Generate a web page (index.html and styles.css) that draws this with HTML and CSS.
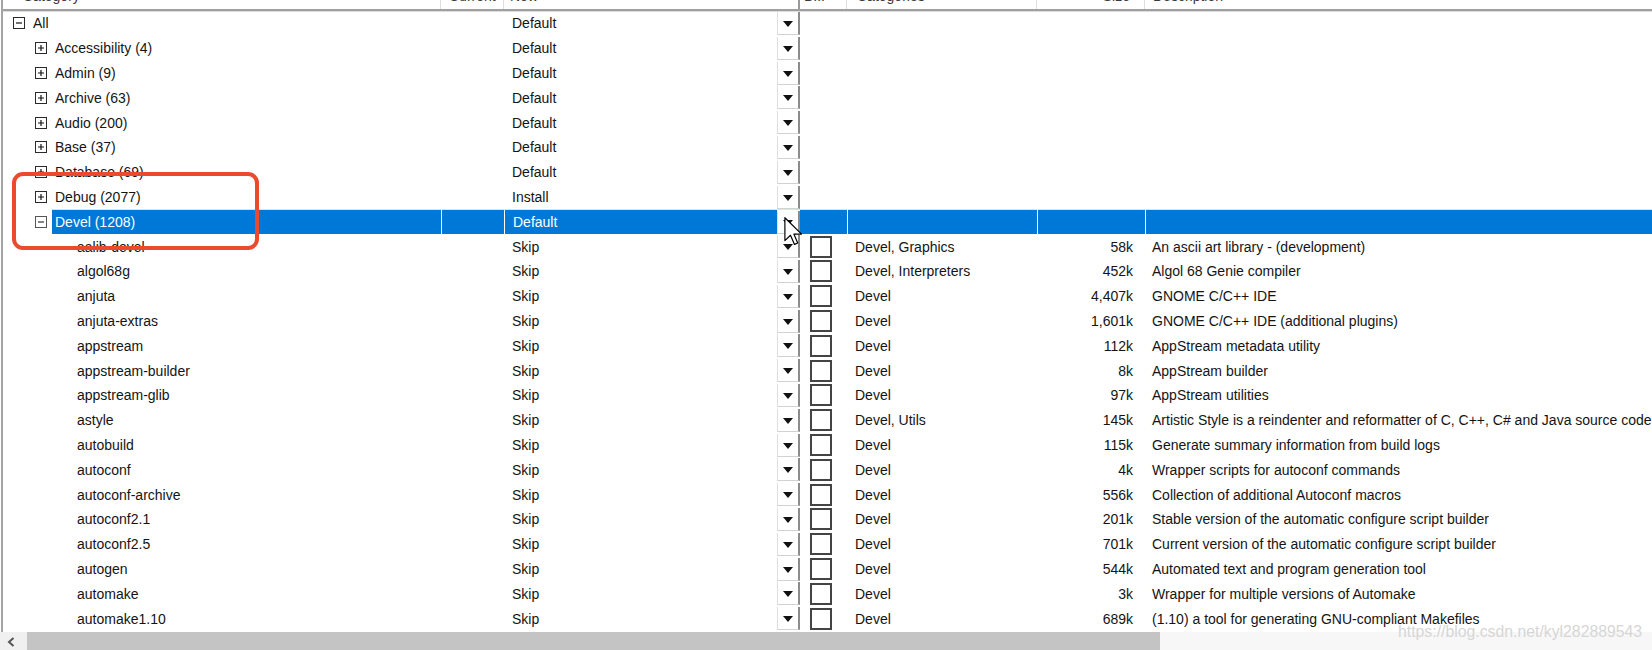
FILE: index.html
```html
<!DOCTYPE html>
<html>
<head>
<meta charset="utf-8">
<link rel="stylesheet" href="styles.css">
</head>
<body>
<div class="grid">
  <div class="row head">
    <div class="cell c0"><span class="htxt">Category</span></div>
    <div class="cell c1"><span class="htxt">Current</span></div>
    <div class="cell c2"><span class="htxt">New</span></div>
    <div class="cell c3"><span class="htxt">B...</span></div>
    <div class="cell c4"><span class="htxt">Categories</span></div>
    <div class="cell c5"><span class="htxt">Size</span></div>
    <div class="cell c6"><span class="htxt">Description</span></div>
  </div>

  <div class="row">
    <div class="cell c0 l0"><svg class="exp" viewBox="0 0 12 12"><rect x=".5" y=".5" width="11" height="11" fill="#fff" stroke="#2a2a2a"/><path d="M3 6h6" stroke="#111" stroke-width="1.2"/></svg><span class="lbl">All</span></div>
    <div class="cell c1"></div>
    <div class="cell c2"><span class="val">Default</span><span class="dd"><i></i></span></div>
    <div class="cell c3"></div><div class="cell c4"></div><div class="cell c5"></div><div class="cell c6"></div>
  </div>
  <div class="row">
    <div class="cell c0 l1"><svg class="exp" viewBox="0 0 12 12"><rect x=".5" y=".5" width="11" height="11" fill="#fff" stroke="#2a2a2a"/><path d="M3 6h6M6 3v6" stroke="#111" stroke-width="1.2"/></svg><span class="lbl">Accessibility (4)</span></div>
    <div class="cell c1"></div>
    <div class="cell c2"><span class="val">Default</span><span class="dd"><i></i></span></div>
    <div class="cell c3"></div><div class="cell c4"></div><div class="cell c5"></div><div class="cell c6"></div>
  </div>
  <div class="row">
    <div class="cell c0 l1"><svg class="exp" viewBox="0 0 12 12"><rect x=".5" y=".5" width="11" height="11" fill="#fff" stroke="#2a2a2a"/><path d="M3 6h6M6 3v6" stroke="#111" stroke-width="1.2"/></svg><span class="lbl">Admin (9)</span></div>
    <div class="cell c1"></div>
    <div class="cell c2"><span class="val">Default</span><span class="dd"><i></i></span></div>
    <div class="cell c3"></div><div class="cell c4"></div><div class="cell c5"></div><div class="cell c6"></div>
  </div>
  <div class="row">
    <div class="cell c0 l1"><svg class="exp" viewBox="0 0 12 12"><rect x=".5" y=".5" width="11" height="11" fill="#fff" stroke="#2a2a2a"/><path d="M3 6h6M6 3v6" stroke="#111" stroke-width="1.2"/></svg><span class="lbl">Archive (63)</span></div>
    <div class="cell c1"></div>
    <div class="cell c2"><span class="val">Default</span><span class="dd"><i></i></span></div>
    <div class="cell c3"></div><div class="cell c4"></div><div class="cell c5"></div><div class="cell c6"></div>
  </div>
  <div class="row">
    <div class="cell c0 l1"><svg class="exp" viewBox="0 0 12 12"><rect x=".5" y=".5" width="11" height="11" fill="#fff" stroke="#2a2a2a"/><path d="M3 6h6M6 3v6" stroke="#111" stroke-width="1.2"/></svg><span class="lbl">Audio (200)</span></div>
    <div class="cell c1"></div>
    <div class="cell c2"><span class="val">Default</span><span class="dd"><i></i></span></div>
    <div class="cell c3"></div><div class="cell c4"></div><div class="cell c5"></div><div class="cell c6"></div>
  </div>
  <div class="row">
    <div class="cell c0 l1"><svg class="exp" viewBox="0 0 12 12"><rect x=".5" y=".5" width="11" height="11" fill="#fff" stroke="#2a2a2a"/><path d="M3 6h6M6 3v6" stroke="#111" stroke-width="1.2"/></svg><span class="lbl">Base (37)</span></div>
    <div class="cell c1"></div>
    <div class="cell c2"><span class="val">Default</span><span class="dd"><i></i></span></div>
    <div class="cell c3"></div><div class="cell c4"></div><div class="cell c5"></div><div class="cell c6"></div>
  </div>
  <div class="row">
    <div class="cell c0 l1"><svg class="exp" viewBox="0 0 12 12"><rect x=".5" y=".5" width="11" height="11" fill="#fff" stroke="#2a2a2a"/><path d="M3 6h6M6 3v6" stroke="#111" stroke-width="1.2"/></svg><span class="lbl">Database (69)</span></div>
    <div class="cell c1"></div>
    <div class="cell c2"><span class="val">Default</span><span class="dd"><i></i></span></div>
    <div class="cell c3"></div><div class="cell c4"></div><div class="cell c5"></div><div class="cell c6"></div>
  </div>
  <div class="row">
    <div class="cell c0 l1"><svg class="exp" viewBox="0 0 12 12"><rect x=".5" y=".5" width="11" height="11" fill="#fff" stroke="#2a2a2a"/><path d="M3 6h6M6 3v6" stroke="#111" stroke-width="1.2"/></svg><span class="lbl">Debug (2077)</span></div>
    <div class="cell c1"></div>
    <div class="cell c2"><span class="val">Install</span><span class="dd"><i></i></span></div>
    <div class="cell c3"></div><div class="cell c4"></div><div class="cell c5"></div><div class="cell c6"></div>
  </div>
  <div class="row sel">
    <div class="cell c0 l1"><svg class="exp" viewBox="0 0 12 12"><rect x=".5" y=".5" width="11" height="11" fill="#fff" stroke="#555"/><path d="M3 6h6" stroke="#333" stroke-width="1.2"/></svg><span class="lbl hl">Devel (1208)</span></div>
    <div class="cell c1"></div>
    <div class="cell c2"><span class="val">Default</span><span class="dd"><i></i></span></div>
    <div class="cell c3"></div><div class="cell c4"></div><div class="cell c5"></div><div class="cell c6"></div>
  </div>

  <div class="row pkg">
    <div class="cell c0 l2">aalib-devel</div><div class="cell c1"></div>
    <div class="cell c2"><span class="val">Skip</span><span class="dd"><i></i></span></div>
    <div class="cell c3"><span class="cb"></span></div><div class="cell c4">Devel, Graphics</div><div class="cell c5">58k</div><div class="cell c6">An ascii art library - (development)</div>
  </div>
  <div class="row pkg">
    <div class="cell c0 l2">algol68g</div><div class="cell c1"></div>
    <div class="cell c2"><span class="val">Skip</span><span class="dd"><i></i></span></div>
    <div class="cell c3"><span class="cb"></span></div><div class="cell c4">Devel, Interpreters</div><div class="cell c5">452k</div><div class="cell c6">Algol 68 Genie compiler</div>
  </div>
  <div class="row pkg">
    <div class="cell c0 l2">anjuta</div><div class="cell c1"></div>
    <div class="cell c2"><span class="val">Skip</span><span class="dd"><i></i></span></div>
    <div class="cell c3"><span class="cb"></span></div><div class="cell c4">Devel</div><div class="cell c5">4,407k</div><div class="cell c6">GNOME C/C++ IDE</div>
  </div>
  <div class="row pkg">
    <div class="cell c0 l2">anjuta-extras</div><div class="cell c1"></div>
    <div class="cell c2"><span class="val">Skip</span><span class="dd"><i></i></span></div>
    <div class="cell c3"><span class="cb"></span></div><div class="cell c4">Devel</div><div class="cell c5">1,601k</div><div class="cell c6">GNOME C/C++ IDE (additional plugins)</div>
  </div>
  <div class="row pkg">
    <div class="cell c0 l2">appstream</div><div class="cell c1"></div>
    <div class="cell c2"><span class="val">Skip</span><span class="dd"><i></i></span></div>
    <div class="cell c3"><span class="cb"></span></div><div class="cell c4">Devel</div><div class="cell c5">112k</div><div class="cell c6">AppStream metadata utility</div>
  </div>
  <div class="row pkg">
    <div class="cell c0 l2">appstream-builder</div><div class="cell c1"></div>
    <div class="cell c2"><span class="val">Skip</span><span class="dd"><i></i></span></div>
    <div class="cell c3"><span class="cb"></span></div><div class="cell c4">Devel</div><div class="cell c5">8k</div><div class="cell c6">AppStream builder</div>
  </div>
  <div class="row pkg">
    <div class="cell c0 l2">appstream-glib</div><div class="cell c1"></div>
    <div class="cell c2"><span class="val">Skip</span><span class="dd"><i></i></span></div>
    <div class="cell c3"><span class="cb"></span></div><div class="cell c4">Devel</div><div class="cell c5">97k</div><div class="cell c6">AppStream utilities</div>
  </div>
  <div class="row pkg">
    <div class="cell c0 l2">astyle</div><div class="cell c1"></div>
    <div class="cell c2"><span class="val">Skip</span><span class="dd"><i></i></span></div>
    <div class="cell c3"><span class="cb"></span></div><div class="cell c4">Devel, Utils</div><div class="cell c5">145k</div><div class="cell c6">Artistic Style is a reindenter and reformatter of C, C++, C# and Java source code</div>
  </div>
  <div class="row pkg">
    <div class="cell c0 l2">autobuild</div><div class="cell c1"></div>
    <div class="cell c2"><span class="val">Skip</span><span class="dd"><i></i></span></div>
    <div class="cell c3"><span class="cb"></span></div><div class="cell c4">Devel</div><div class="cell c5">115k</div><div class="cell c6">Generate summary information from build logs</div>
  </div>
  <div class="row pkg">
    <div class="cell c0 l2">autoconf</div><div class="cell c1"></div>
    <div class="cell c2"><span class="val">Skip</span><span class="dd"><i></i></span></div>
    <div class="cell c3"><span class="cb"></span></div><div class="cell c4">Devel</div><div class="cell c5">4k</div><div class="cell c6">Wrapper scripts for autoconf commands</div>
  </div>
  <div class="row pkg">
    <div class="cell c0 l2">autoconf-archive</div><div class="cell c1"></div>
    <div class="cell c2"><span class="val">Skip</span><span class="dd"><i></i></span></div>
    <div class="cell c3"><span class="cb"></span></div><div class="cell c4">Devel</div><div class="cell c5">556k</div><div class="cell c6">Collection of additional Autoconf macros</div>
  </div>
  <div class="row pkg">
    <div class="cell c0 l2">autoconf2.1</div><div class="cell c1"></div>
    <div class="cell c2"><span class="val">Skip</span><span class="dd"><i></i></span></div>
    <div class="cell c3"><span class="cb"></span></div><div class="cell c4">Devel</div><div class="cell c5">201k</div><div class="cell c6">Stable version of the automatic configure script builder</div>
  </div>
  <div class="row pkg">
    <div class="cell c0 l2">autoconf2.5</div><div class="cell c1"></div>
    <div class="cell c2"><span class="val">Skip</span><span class="dd"><i></i></span></div>
    <div class="cell c3"><span class="cb"></span></div><div class="cell c4">Devel</div><div class="cell c5">701k</div><div class="cell c6">Current version of the automatic configure script builder</div>
  </div>
  <div class="row pkg">
    <div class="cell c0 l2">autogen</div><div class="cell c1"></div>
    <div class="cell c2"><span class="val">Skip</span><span class="dd"><i></i></span></div>
    <div class="cell c3"><span class="cb"></span></div><div class="cell c4">Devel</div><div class="cell c5">544k</div><div class="cell c6">Automated text and program generation tool</div>
  </div>
  <div class="row pkg">
    <div class="cell c0 l2">automake</div><div class="cell c1"></div>
    <div class="cell c2"><span class="val">Skip</span><span class="dd"><i></i></span></div>
    <div class="cell c3"><span class="cb"></span></div><div class="cell c4">Devel</div><div class="cell c5">3k</div><div class="cell c6">Wrapper for multiple versions of Automake</div>
  </div>
  <div class="row pkg">
    <div class="cell c0 l2">automake1.10</div><div class="cell c1"></div>
    <div class="cell c2"><span class="val">Skip</span><span class="dd"><i></i></span></div>
    <div class="cell c3"><span class="cb"></span></div><div class="cell c4">Devel</div><div class="cell c5">689k</div><div class="cell c6">(1.10) a tool for generating GNU-compliant Makefiles</div>
  </div>
</div>

<div class="hscroll">
  <div class="arrow"><svg width="8" height="10" viewBox="0 0 8 10"><path d="M6.5 1L2 5l4.5 4" fill="none" stroke="#555" stroke-width="2"/></svg></div>
  <div class="thumb"></div>
  <div class="track"></div>
</div>

<div class="mark"></div>
<svg class="cursor" width="18" height="28" viewBox="0 0 12 19"><path d="M0.5 0.5v15.5l3.8-3.6 2.7 6.2 2.2-1-2.6-6h5.2z" fill="#fff" stroke="#000" stroke-width="0.8" stroke-linejoin="round"/></svg>
<div class="wm">https://blog.csdn.net/kyl282889543</div>
</body>
</html>
```

FILE: styles.css
```css
* { box-sizing: border-box; }
html, body { margin: 0; padding: 0; }
body {
  width: 1652px;
  height: 650px;
  overflow: hidden;
  position: relative;
  background: #fff;
  font-family: "Liberation Sans", Arial, sans-serif;
  font-size: 14px;
  color: #141414;
}
.grid {
  margin-left: 1px;
  border-left: 2px solid #a4a4a4;
  height: 632px;
  display: flex;
  flex-direction: column;
  overflow: hidden;
}
.row {
  display: grid;
  grid-template-columns: 438px 63px 296px 47px 190px 108px 1fr;
  height: 24.8px;
  flex: none;
}
.cell {
  display: flex;
  align-items: center;
  white-space: nowrap;
  overflow: hidden;
  min-width: 0;
}
.head {
  height: 11px;
  border-bottom: 2px solid #a0a0a0;
  box-shadow: 0 1px 0 #dcdcdc;
}
.head .cell {
  align-items: flex-end;
  border-right: 1px solid #dedede;
  padding-left: 20px;
}
.head .c1 { padding-left: 8px; }
.head .c2 { padding-left: 6px; border-right: 2px solid #9a9a9a; }
.head .c3 { padding-left: 4px; }
.head .c4 { padding-left: 10px; }
.head .c5 { justify-content: flex-end; padding-right: 14px; }
.head .c6 { padding-left: 8px; border-right: none; }
.htxt {
  line-height: 16px;
  margin-bottom: 5px;
  color: #3a3a3a;
}
.exp { width: 12px; height: 12px; flex: none; }
.l0 { padding-left: 10px; }
.l0 .lbl { margin-left: 8px; }
.l1 { padding-left: 32px; }
.l1 .lbl { margin-left: 8px; }
.l2 { padding-left: 74px; }
.c2 { padding-left: 8px; }
.val { flex: 1; }
.dd {
  width: 23px;
  height: 23px;
  margin-top: 1px;
  align-self: flex-start;
  flex: none;
  background: #fff;
  border-left: 1px solid #dedede;
  border-bottom: 1px solid #d2d2d2;
  border-right: 2px solid #8c8c8c;
  display: flex;
  align-items: center;
  justify-content: center;
}
.dd i {
  width: 0;
  height: 0;
  border-left: 5px solid transparent;
  border-right: 5px solid transparent;
  border-top: 6px solid #111;
  margin-top: 2px;
}
.cb {
  width: 22px;
  height: 22px;
  margin-left: 10px;
  border: 2px solid #444;
  background: #fff;
}
.c4 { padding-left: 8px; }
.c5 { justify-content: flex-end; padding-right: 12px; }
.c6 { padding-left: 7px; }

/* selected row */
.sel .cell { color: #fff; }
.sel .c1, .sel .c3, .sel .c4, .sel .c5, .sel .c6 {
  background: #0078d7;
  border-left: 1px solid #fff;
}
.sel .c3 { border-left: none; }
.sel .c2 { padding-left: 0; }
.sel .c2 .val {
  align-self: stretch;
  display: flex;
  align-items: center;
  padding-left: 8px;
  background: #0078d7;
  border-left: 1px solid #fff;
}
.sel .lbl.hl {
  align-self: stretch;
  flex: 1;
  display: flex;
  align-items: center;
  margin-left: 5px;
  padding-left: 3px;
  background: #0078d7;
}
.sel .cell { border-top: 1px solid #cfe6fa; }
.sel .c0 { border-top: none; }
.sel .c0 .hl { border-top: 1px solid #cfe6fa; }

/* horizontal scrollbar */
.hscroll {
  height: 18px;
  display: flex;
  background: #f0f0f0;
}
.hscroll .arrow {
  width: 27px;
  display: flex;
  align-items: center;
  justify-content: center;
  padding-right: 5px;
  padding-top: 2px;
}
.hscroll .thumb { width: 1133px; background: #c4c4c4; }
.hscroll .track { flex: 1; background: #f7f7f7; }

/* overlays */
.mark {
  position: absolute;
  left: 12px;
  top: 172px;
  width: 247px;
  height: 78px;
  border: 4px solid #ea4a2e;
  border-radius: 11px;
}
.cursor {
  position: absolute;
  left: 784px;
  top: 217px;
}
.wm {
  position: absolute;
  left: 1398px;
  top: 623px;
  font-size: 15.8px;
  color: #d6d6d6;
  white-space: nowrap;
}
```
